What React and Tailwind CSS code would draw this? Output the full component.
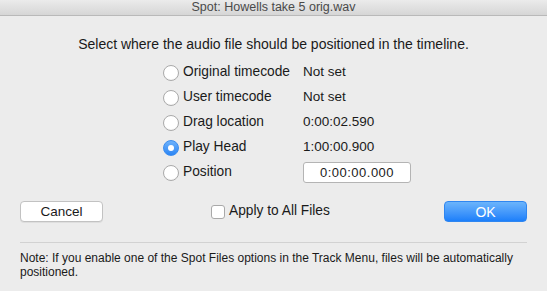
import { useState } from 'react';

const rows = [
  { id: 'orig', label: 'Original timecode', value: 'Not set' },
  { id: 'user', label: 'User timecode', value: 'Not set' },
  { id: 'drag', label: 'Drag location', value: '0:00:02.590' },
  { id: 'head', label: 'Play Head', value: '1:00:00.900' },
  { id: 'pos', label: 'Position', value: null },
];

function Radio({ checked }) {
  if (checked) {
    return (
      <span className="flex h-[16px] w-[16px] shrink-0 items-center justify-center rounded-full border border-[#3b8df0] bg-gradient-to-b from-[#6db2fb] to-[#2a85f4]">
        <span className="h-[6px] w-[6px] rounded-full bg-white" />
      </span>
    );
  }
  return (
    <span className="h-[16px] w-[16px] shrink-0 rounded-full border border-[#a9a9a9] bg-white shadow-[inset_0_-1px_0_rgba(0,0,0,0.04)]" />
  );
}

export default function App() {
  const [selected, setSelected] = useState('head');
  const [position, setPosition] = useState('0:00:00.000');
  const [applyAll, setApplyAll] = useState(false);

  return (
    <div
      className="flex h-[291px] w-[547px] flex-col overflow-hidden bg-[#ececec] text-[#1a1a1a]"
      style={{ fontFamily: '"Liberation Sans", Arial, sans-serif' }}
    >
      {/* title bar */}
      <div className="flex h-[16px] shrink-0 items-center justify-center border-b border-[#b9b9b9] bg-gradient-to-b from-[#ebebeb] to-[#d6d6d6] text-[12.5px] text-[#4a4a4a]">
        Spot: Howells take 5 orig.wav
      </div>

      <p className="mt-[20px] text-center text-[14px] leading-[16px]">
        Select where the audio file should be positioned in the timeline.
      </p>

      {/* options */}
      <div className="ml-[163px] mt-[8px] flex flex-col">
        {rows.map((r) => (
          <div key={r.id} className="flex h-[25px] items-center">
            <button
              type="button"
              onClick={() => setSelected(r.id)}
              className="flex w-[140px] items-center gap-[4px] text-left text-[13.75px]"
            >
              <Radio checked={selected === r.id} />
              <span>{r.label}</span>
            </button>
            {r.value ? (
              <span className="text-[13.5px]">{r.value}</span>
            ) : (
              <input
                value={position}
                onChange={(e) => setPosition(e.target.value)}
                className="h-[21px] w-[108px] rounded-[3px] border border-[#b4b4b4] bg-white text-center text-[13px] tracking-[0.5px] outline-none"
              />
            )}
          </div>
        ))}
      </div>

      {/* buttons */}
      <div className="mx-[20px] mt-[16px] flex h-[21px] items-center">
        <button
          type="button"
          className="h-[21px] w-[83px] rounded-[4px] border border-[#c2c2c2] bg-white text-[13.5px] shadow-[0_1px_0_rgba(0,0,0,0.06)]"
        >
          Cancel
        </button>
        <label className="ml-[108px] flex items-center gap-[4px] text-[13.75px]">
          <input
            type="checkbox"
            checked={applyAll}
            onChange={(e) => setApplyAll(e.target.checked)}
            className="h-[14px] w-[14px] appearance-none rounded-[3px] border border-[#a9a9a9] bg-white"
          />
          Apply to All Files
        </label>
        <button
          type="button"
          className="ml-auto h-[21px] w-[83px] rounded-[4px] border border-[#2f86f0] bg-gradient-to-b from-[#6bb4fb] to-[#1b7ffa] text-[14px] text-white"
        >
          OK
        </button>
      </div>

      <div className="mx-[20px] mt-[20px] h-px bg-[#d2d2d2]" />

      <p className="mx-[20px] mt-[9px] text-[12px] leading-[13.5px]">
        Note: If you enable one of the Spot Files options in the Track Menu, files will be automatically
        positioned.
      </p>
    </div>
  );
}
